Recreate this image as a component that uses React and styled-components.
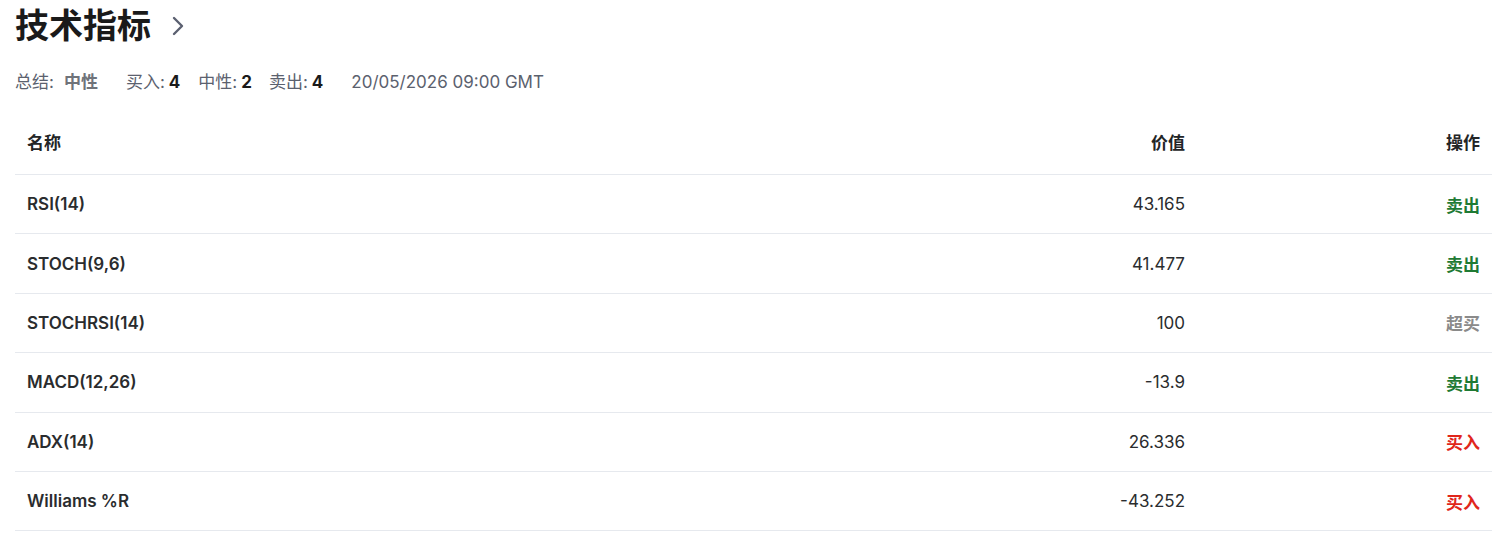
import styled, { createGlobalStyle } from 'styled-components';

const GlobalStyle = createGlobalStyle`
  body {
    margin: 0;
    background: #fff;
    font-family: Inter, "Noto Sans CJK SC", sans-serif;
    color: #232526;
  }
`;

const Page = styled.div`
  padding: 5px 11px 0 15px;
`;

const Title = styled.h2`
  display: flex;
  align-items: center;
  gap: 20px;
  margin: 0;
  font-size: 34px;
  font-weight: 700;
  line-height: 42px;
  color: #1a1a1a;
`;

const Chevron = () => (
  <svg width="14" height="20" viewBox="0 0 14 20" fill="none">
    <path d="M3 2l8 8-8 8" stroke="#5b6070" strokeWidth="2.4" strokeLinecap="round" strokeLinejoin="round" />
  </svg>
);

const Summary = styled.div`
  display: flex;
  align-items: center;
  margin-top: 25px;
  font-size: 17px;
  line-height: 20px;
  color: #5b616e;
`;

const Group = styled.span`
  margin-right: ${p => p.$gap || 18}px;
`;

const Strong = styled.b`
  font-weight: ${p => p.$muted ? 600 : 700};
  color: ${p => p.$muted ? '#6f737a' : '#1a1a1a'};
  margin-left: ${p => p.$muted ? 10 : 4}px;
`;

const Table = styled.table`
  width: 100%;
  border-collapse: collapse;
  margin-top: 16px;
`;

const Th = styled.th`
  text-align: ${p => p.$align || 'left'};
  font-size: 17px;
  font-weight: 700;
  color: #232526;
  padding: 0 12px;
  height: 66px;
  border-bottom: 1px solid #e6e9ee;
  width: ${p => p.$w || 'auto'};
`;

const Td = styled.td`
  text-align: ${p => p.$align || 'left'};
  font-size: 17px;
  padding: 0 12px;
  height: 58.4px;
  border-bottom: 1px solid #e6e9ee;
  font-weight: ${p => p.$bold ? 600 : 400};
  color: #2a2c2e;
`;

const Action = styled.span`
  font-weight: 600;
  font-size: 17px;
  color: ${p => ({ sell: '#1f7a34', buy: '#e0261b', neutral: '#8a8a8a' })[p.$kind]};
`;

const rows = [
  { name: 'RSI(14)', value: '43.165', action: '卖出', kind: 'sell' },
  { name: 'STOCH(9,6)', value: '41.477', action: '卖出', kind: 'sell' },
  { name: 'STOCHRSI(14)', value: '100', action: '超买', kind: 'neutral' },
  { name: 'MACD(12,26)', value: '-13.9', action: '卖出', kind: 'sell' },
  { name: 'ADX(14)', value: '26.336', action: '买入', kind: 'buy' },
  { name: 'Williams %R', value: '-43.252', action: '买入', kind: 'buy' },
];

export default function App() {
  return (
    <Page>
      <GlobalStyle />
      <Title>
        技术指标
        <Chevron />
      </Title>
      <Summary>
        <Group $gap={28}>总结:<Strong $muted>中性</Strong></Group>
        <Group $gap={18}>买入:<Strong>4</Strong></Group>
        <Group $gap={17}>中性:<Strong>2</Strong></Group>
        <Group $gap={28}>卖出:<Strong>4</Strong></Group>
        <span>20/05/2026 09:00 GMT</span>
      </Summary>
      <Table>
        <thead>
          <tr>
            <Th>名称</Th>
            <Th $align="right">价值</Th>
            <Th $align="right" $w="271px">操作</Th>
          </tr>
        </thead>
        <tbody>
          {rows.map(r => (
            <tr key={r.name}>
              <Td $bold>{r.name}</Td>
              <Td $align="right">{r.value}</Td>
              <Td $align="right"><Action $kind={r.kind}>{r.action}</Action></Td>
            </tr>
          ))}
        </tbody>
      </Table>
    </Page>
  );
}
